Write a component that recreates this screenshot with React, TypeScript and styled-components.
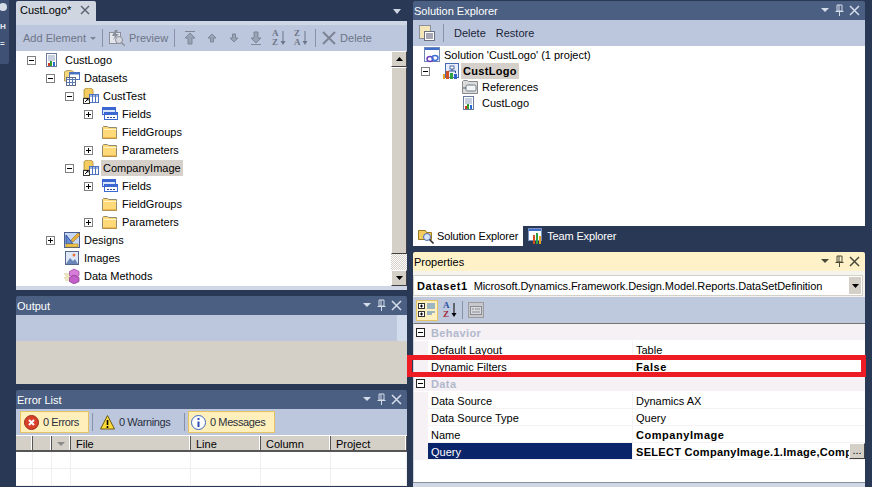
import { ReactNode } from "react";
import styled, { createGlobalStyle } from "styled-components";

const GlobalStyle = createGlobalStyle`
  html, body { margin: 0; padding: 0; background: #293955; overflow: hidden; }
  body { font-family: "Liberation Sans", Arial, sans-serif; font-size: 11px; color: #000; }
`;

type TreeNode = {
  level: number;
  label: string;
  toggle?: "plus" | "minus";
  icon: ReactNode;
  selected?: boolean;
};

const Expander = ({ kind, dark }: { kind?: "plus" | "minus"; dark?: boolean }) => (
  <ExpanderSlot>
    {kind && (
      <svg width="9" height="9" viewBox="0 0 9 9">
        <rect x="0.5" y="0.5" width="8" height="8" fill="#fff" stroke={dark ? "#222" : "#808080"} />
        <path d="M2 4.5h5" stroke="#000" />
        {kind === "plus" && <path d="M4.5 2v5" stroke="#000" />}
      </svg>
    )}
  </ExpanderSlot>
);

const ReportIcon = () => (
  <svg width="16" height="16" viewBox="0 0 16 16">
    <rect x="1.500" y="1.500" width="10" height="13" fill="#fff" stroke="#6a7a9c" />
    <path d="M3 4h7M3 6h7M3 8h7" stroke="#8fa0bd" />
    <rect x="3" y="11" width="2" height="3" fill="#d03a20" />
    <rect x="5" y="9" width="2" height="5" fill="#2fa02f" />
    <rect x="8" y="10" width="2" height="4" fill="#2a6bd0" />
  </svg>
);

const DatasetsIcon = () => (
  <svg width="16" height="16" viewBox="0 0 16 16">
    <path d="M0.500 2a4.500 1.500 0 0 1 9 0v9h-9z" fill="#f6d77c" stroke="#b09a5a" />
    <rect x="5.500" y="2.500" width="10" height="7" fill="#fff" stroke="#4a72c0" />
    <path d="M5.500 3.500h10" stroke="#4a72c0" strokeWidth="2" />
    <rect x="2.500" y="7.500" width="9" height="8" fill="#fff" stroke="#5a6a8a" />
    <path d="M2.500 9.500h9M5.500 8v7M8.500 8v7M3 12.500h8" stroke="#5a7ab0" />
  </svg>
);

const DatasetIcon = () => (
  <svg width="16" height="16" viewBox="0 0 16 16">
    <path d="M1 2a4 1.600 0 0 1 9 0v8H1z" fill="#f3cb5e" stroke="#a88a38" strokeWidth="0.800" />
    <rect x="6.500" y="6.500" width="9" height="8" fill="#fff" stroke="#4a72c0" />
    <path d="M6.500 8h9M9.500 7v7M12.500 7v7" stroke="#4a72c0" />
    <rect x="0.500" y="10.500" width="6" height="5" fill="#fff" stroke="#333" />
    <path d="M2 14l3-3M3.500 11H5v1.500" stroke="#000" fill="none" />
  </svg>
);

const FieldsIcon = () => (
  <svg width="16" height="16" viewBox="0 0 16 16">
    <rect x="0.500" y="1.500" width="13" height="7" fill="#dbe6fb" stroke="#3a68d0" />
    <path d="M1 3h12" stroke="#3a68d0" strokeWidth="2" />
    <rect x="2.500" y="6.500" width="13" height="7" fill="#fff" stroke="#3a68d0" />
    <path d="M3 8h12" stroke="#3a68d0" strokeWidth="2" />
    <path d="M5 11.500h2M8 11.500h2M11 11.500h2" stroke="#2a4aa0" />
  </svg>
);

const FolderIcon = () => (
  <svg width="16" height="16" viewBox="0 0 16 16">
    <path d="M0.500 3.500l1-1h4l1 1h8v11h-14z" fill="#ffd877" stroke="#8f8a70" />
    <path d="M1.500 5.500h13" stroke="#fff4c8" />
    <path d="M1 14h14" stroke="#d79a2a" />
  </svg>
);

const DesignsIcon = () => (
  <svg width="16" height="16" viewBox="0 0 16 16">
    <rect x="0.500" y="0.500" width="15" height="15" fill="#c6d8f5" stroke="#4a5f90" />
    <path d="M2 3l7 9H2z" fill="#6a8fd8" stroke="#2d4e9a" />
    <path d="M14 1l2 2-7 7-2-2z" fill="#e8b040" stroke="#9a6a10" strokeWidth="0.600" />
    <rect x="2" y="12" width="12" height="3" fill="#f2c94c" stroke="#a88020" strokeWidth="0.600" />
  </svg>
);

const ImagesIcon = () => (
  <svg width="16" height="16" viewBox="0 0 16 16">
    <rect x="1.500" y="1.500" width="13" height="13" fill="#dfe8f7" stroke="#55688c" />
    <circle cx="10" cy="5" r="1.500" fill="#e8743a" />
    <path d="M2 14l4-6 3 3 2-2 3 5z" fill="#6a86b8" />
  </svg>
);

const MethodsIcon = () => (
  <svg width="16" height="16" viewBox="0 0 16 16">
    <path d="M0 6h6M1 8h5M0 10h6M1 12h5" stroke="#d9c880" />
    <path d="M10 1l5 2.500v4L10 10 5.500 7.500v-4z" fill="#d77fd8" stroke="#9a3fa0" strokeWidth="0.700" />
    <path d="M10 7l5 2.500v4L10 16l-4.500-2.500v-4z" fill="#c25fc8" stroke="#8a2f90" strokeWidth="0.700" />
  </svg>
);

const SolutionIcon = () => (
  <svg width="16" height="16" viewBox="0 0 16 16">
    <rect x="0.500" y="0.500" width="15" height="14" fill="#fff" stroke="#6f87b8" />
    <rect x="1" y="1" width="14" height="2" fill="#3f6fc8" />
    <ellipse cx="6" cy="12" rx="3" ry="2.400" fill="none" stroke="#6a3fc0" strokeWidth="1.500" />
    <ellipse cx="11" cy="11" rx="3" ry="2.400" fill="none" stroke="#3f6fd8" strokeWidth="1.500" />
  </svg>
);

const ProjectIcon = () => (
  <svg width="16" height="16" viewBox="0 0 16 16">
    <rect x="2.500" y="0.500" width="13" height="14" fill="#e8eefb" stroke="#4a6ab0" />
    <rect x="7" y="3" width="4" height="3" fill="#fff" stroke="#2a4a90" strokeWidth="0.800" />
    <path d="M9 6v2M5.500 10V8h7v2" stroke="#2a4a90" fill="none" />
    <rect x="0" y="11" width="2" height="5" fill="#e8a020" />
    <rect x="3" y="8" width="3" height="8" fill="#d05020" />
    <rect x="7" y="10" width="3" height="6" fill="#30a040" />
    <rect x="11" y="11" width="3" height="5" fill="#3060c8" />
  </svg>
);

const ReferencesIcon = () => (
  <svg width="16" height="16" viewBox="0 0 16 16">
    <path d="M0.500 2.500l1-1h4l1 1h9v12h-15z" fill="#dcdcdc" stroke="#8a8a8a" />
    <rect x="4" y="6" width="10" height="6" rx="1.500" fill="#f4f4f4" stroke="#6a7a8a" />
    <path d="M1 9h3" stroke="#4a5a6a" />
  </svg>
);

const leftTree: TreeNode[] = [
  { level: 0, label: "CustLogo", toggle: "minus", icon: <ReportIcon /> },
  { level: 1, label: "Datasets", toggle: "minus", icon: <DatasetsIcon /> },
  { level: 2, label: "CustTest", toggle: "minus", icon: <DatasetIcon /> },
  { level: 3, label: "Fields", toggle: "plus", icon: <FieldsIcon /> },
  { level: 3, label: "FieldGroups", icon: <FolderIcon /> },
  { level: 3, label: "Parameters", toggle: "plus", icon: <FolderIcon /> },
  { level: 2, label: "CompanyImage", toggle: "minus", icon: <DatasetIcon />, selected: true },
  { level: 3, label: "Fields", toggle: "plus", icon: <FieldsIcon /> },
  { level: 3, label: "FieldGroups", icon: <FolderIcon /> },
  { level: 3, label: "Parameters", toggle: "plus", icon: <FolderIcon /> },
  { level: 1, label: "Designs", toggle: "plus", icon: <DesignsIcon /> },
  { level: 1, label: "Images", icon: <ImagesIcon /> },
  { level: 1, label: "Data Methods", icon: <MethodsIcon /> },
];

const columnWidths = [17, 19, 19, 120, 70, 70, 76];

const WindowControls = ({ dark }: { dark?: boolean }) => {
  const c = dark ? "#4a4a3a" : "#d5dcea";
  return (
    <svg width="40" height="13" viewBox="0 0 40 13">
      <path d="M0 4h8l-4 4z" fill={c} />
      <path d="M16 1h5v6h-5zM18 1v6M14.500 7.500h8M18.500 8v4" stroke={c} fill="none" />
      <path d="M29 2l9 9M38 2l-9 9" stroke={c} strokeWidth="1.500" />
    </svg>
  );
};

const Title = ({ children, active }: { children: ReactNode; active?: boolean }) => (
  <TitleBar $active={active}>
    <TitleText>{children}</TitleText>
    <WindowControls dark={active} />
  </TitleBar>
);

const Arrow = ({ d }: { d: string }) => (
  <svg width="16" height="16" viewBox="0 0 16 16">
    <path d={d} fill="#9aa3b5" stroke="#7f8798" />
  </svg>
);

const SortIcon = ({ top, bottom, disabled }: { top: string; bottom: string; disabled?: boolean }) => (
  <SortBox $disabled={disabled}>
    <span>
      <i>{top}</i>
      <i>{bottom}</i>
    </span>
    <svg width="6" height="16" viewBox="0 0 6 16">
      <path d="M3 1v12" stroke={disabled ? "#6d7587" : "#000"} />
      <path d="M0.500 11h5L3 15z" fill={disabled ? "#6d7587" : "#000"} />
    </svg>
  </SortBox>
);

export default function App() {
  return (
    <>
      <GlobalStyle />
      <Page>
        <Rail>
          <RailTab>
            <svg width="9" height="18" viewBox="0 0 9 18">
              <circle cx="3" cy="7" r="4" fill="#d6dce8" />
            </svg>
            <RailGlyph>H</RailGlyph>
            <RailGlyph>=</RailGlyph>
          </RailTab>
        </Rail>

        <LeftColumn>
          <DocTabs>
            <DocTab>
              CustLogo*
              <svg width="10" height="10" viewBox="0 0 10 10">
                <path d="M1 1l8 8M9 1l-8 8" stroke="#5a6070" strokeWidth="1.400" />
              </svg>
            </DocTab>
            <svg width="8" height="5" viewBox="0 0 8 5">
              <path d="M0 0h8L4 5z" fill="#cfd6e5" />
            </svg>
          </DocTabs>
          <DocBand />
          <Toolbar $height={26} $pad={7}>
            <MutedButton>
              Add Element
              <svg width="6" height="3" viewBox="0 0 6 3">
                <path d="M0 0h6L3 3z" fill="#7d8494" />
              </svg>
            </MutedButton>
            <Sep />
            <svg width="16" height="16" viewBox="0 0 16 16">
              <rect x="0.500" y="2.500" width="11" height="11" fill="#e5e7ec" stroke="#8a8f9c" />
              <path d="M6 0L3 6h3L4 10l6-6H7l2-4z" fill="#8a8f9c" />
              <circle cx="10" cy="10" r="3.500" fill="#d5d8df" stroke="#8a8f9c" />
              <path d="M12.500 12.500L16 16" stroke="#8a8f9c" strokeWidth="1.500" />
            </svg>
            <MutedButton>Preview</MutedButton>
            <Sep $after={3} $before={2} />
            <ToolGroup>
              <Arrow d="M3 1.500h10M8 3l5 5h-3v6H6V8H3z" />
              <Arrow d="M8 4l4 4h-2.500v4h-3V8H4z" />
              <Arrow d="M8 12l4-4h-2.500V4h-3v4H4z" />
              <Arrow d="M3 14.500h10M8 13l5-5h-3V2H6v6H3z" />
              <SortIcon top="A" bottom="Z" disabled />
              <SortIcon top="Z" bottom="A" disabled />
            </ToolGroup>
            <Sep $before={3} />
            <svg width="14" height="14" viewBox="0 0 14 14">
              <path d="M1 1l12 12M13 1L1 13" stroke="#7d8494" strokeWidth="2" />
            </svg>
            <MutedButton>Delete</MutedButton>
          </Toolbar>
          <TreePane>
            <Tree>
              {leftTree.map((n, i) => (
                <TreeRow key={i} $level={n.level}>
                  <Expander kind={n.toggle} />
                  <IconSlot>{n.icon}</IconSlot>
                  <NodeLabel $selected={n.selected}>{n.label}</NodeLabel>
                </TreeRow>
              ))}
            </Tree>
            <ScrollBar>
              <ScrollButton>
                <svg width="7" height="4" viewBox="0 0 7 4">
                  <path d="M3.500 0L7 4H0z" fill="#000" />
                </svg>
              </ScrollButton>
              <ScrollThumb />
              <ScrollTrack />
              <ScrollButton>
                <svg width="7" height="4" viewBox="0 0 7 4">
                  <path d="M0 0h7L3.500 4z" fill="#000" />
                </svg>
              </ScrollButton>
            </ScrollBar>
          </TreePane>
          <DocBand />

          <PanelGap />
          <Title>Output</Title>
          <Toolbar $height={26}>
            <OutputGrip />
          </Toolbar>
          <OutputBody />

          <PanelGap />
          <Title>Error List</Title>
          <Toolbar $height={26} $pad={4} $gap={1}>
            <FilterButton $on $w={69} $pad={3}>
              <svg width="15" height="15" viewBox="0 0 15 15">
                <circle cx="7.500" cy="7.500" r="7" fill="#d8402a" stroke="#9a2a1a" />
                <path d="M5 5l5 5M10 5l-5 5" stroke="#fff" strokeWidth="2" />
              </svg>
              0 Errors
            </FilterButton>
            <Sep />
            <FilterButton $w={85} $pad={3}>
              <svg width="15" height="15" viewBox="0 0 15 15">
                <path d="M7.500 0.500L14.500 14H0.500z" fill="#ffd83a" stroke="#6a5a10" />
                <path d="M7.500 5v5" stroke="#000" strokeWidth="1.600" />
                <path d="M7.500 11v2" stroke="#000" strokeWidth="1.600" />
              </svg>
              0 Warnings
            </FilterButton>
            <Sep />
            <FilterButton $on $w={87} $pad={2}>
              <svg width="15" height="15" viewBox="0 0 15 15">
                <circle cx="7.500" cy="7.500" r="7" fill="#fff" stroke="#3a66c0" />
                <path d="M7.500 3v2M7.500 6.500V12" stroke="#2a4fb0" strokeWidth="2" />
              </svg>
              0 Messages
            </FilterButton>
          </Toolbar>
          <ErrorHeader>
            <HeadCell $w={17} />
            <HeadCell $w={19} />
            <HeadCell $w={19}>
              <svg width="8" height="4" viewBox="0 0 8 4">
                <path d="M0 0h8L4 4z" fill="#8a8a8a" />
              </svg>
            </HeadCell>
            <HeadCell $w={120}>File</HeadCell>
            <HeadCell $w={70}>Line</HeadCell>
            <HeadCell $w={70}>Column</HeadCell>
            <HeadCell $w={76}>Project</HeadCell>
          </ErrorHeader>
          <ErrorRow>
            {columnWidths.map((w, i) => (
              <EmptyCell key={i} $w={w} />
            ))}
          </ErrorRow>
          <ErrorRow>
            {columnWidths.map((w, i) => (
              <EmptyCell key={i} $w={w} />
            ))}
          </ErrorRow>
        </LeftColumn>

        <RightColumn>
          <Title>Solution Explorer</Title>
          <Toolbar $height={26} $pad={6} $gap={6}>
            <svg width="16" height="16" viewBox="0 0 16 16">
              <rect x="0.500" y="0.500" width="11" height="13" fill="#f4e6b8" stroke="#8a8f9c" />
              <rect x="5.500" y="6.500" width="10" height="9" fill="#fff" stroke="#6a7080" />
              <path d="M7 9h7M7 11h7M7 13h7" stroke="#4a5068" />
            </svg>
            <Sep />
            <PlainButton>Delete</PlainButton>
            <PlainButton>Restore</PlainButton>
          </Toolbar>
          <SolutionPane>
            <SolutionRow $level={0}>
              <IconSlot><SolutionIcon /></IconSlot>
              <NodeLabel>Solution 'CustLogo' (1 project)</NodeLabel>
            </SolutionRow>
            <SolutionRow $level={1}>
              <Expander kind="minus" />
              <IconSlot><ProjectIcon /></IconSlot>
              <NodeLabel $selected $bold>CustLogo</NodeLabel>
            </SolutionRow>
            <SolutionRow $level={2}>
              <IconSlot><ReferencesIcon /></IconSlot>
              <NodeLabel>References</NodeLabel>
            </SolutionRow>
            <SolutionRow $level={2}>
              <IconSlot><ReportIcon /></IconSlot>
              <NodeLabel>CustLogo</NodeLabel>
            </SolutionRow>
          </SolutionPane>
          <ToolTabs>
            <ToolTab $active>
              <svg width="16" height="16" viewBox="0 0 16 16">
                <path d="M0.500 2.500h7l1 2h5v7h-13z" fill="#f3cb5e" stroke="#9a7a20" />
                <circle cx="9" cy="9" r="3.500" fill="#d5e4f8" stroke="#4a6ab0" />
                <path d="M11.500 11.500L15.500 15.500" stroke="#333" strokeWidth="1.600" />
              </svg>
              Solution Explorer
            </ToolTab>
            <ToolTab>
              <svg width="16" height="16" viewBox="0 0 16 16">
                <rect x="0.500" y="0.500" width="13" height="12" fill="#fff" stroke="#7a90c0" />
                <rect x="1" y="1" width="12" height="2" fill="#3f6fc8" />
                <rect x="5" y="7" width="2" height="9" fill="#d05020" />
                <rect x="8" y="5" width="2" height="11" fill="#30a040" />
                <rect x="11" y="8" width="2" height="8" fill="#e8a020" />
              </svg>
              Team Explorer
            </ToolTab>
          </ToolTabs>

          <PanelGap />
          <Title active>Properties</Title>
          <ComboBand>
            <Combo>
              <ComboText><b>Dataset1</b>Microsoft.Dynamics.Framework.Design.Model.Reports.DataSetDefinition</ComboText>
              <ComboButton>
                <svg width="7" height="4" viewBox="0 0 7 4">
                  <path d="M0 0h7L3.500 4z" fill="#000" />
                </svg>
              </ComboButton>
            </Combo>
          </ComboBand>
          <PropToolbar>
            <ToggleButton>
              <svg width="20" height="18" viewBox="0 0 20 18">
                <rect x="1.500" y="2.500" width="6" height="5" fill="#fff" stroke="#333" />
                <rect x="1.500" y="10.500" width="6" height="5" fill="#fff" stroke="#333" />
                <path d="M3 5h3M4.500 3.500v3M3 13h3M4.500 11.500v3" stroke="#000" />
                <path d="M10 3h8M10 5h8M10 7h8M10 11h8M10 13h5" stroke="#3a7ac0" />
              </svg>
            </ToggleButton>
            <SortIcon top="A" bottom="Z" />
            <Sep />
            <svg width="16" height="16" viewBox="0 0 16 16">
              <rect x="0.500" y="0.500" width="15" height="15" fill="#c6c8cc" stroke="#9a9ca2" />
              <rect x="2.500" y="4.500" width="11" height="8" fill="#d8dade" stroke="#8a8c92" />
              <path d="M4 7h2M7 7h5M4 10h8" stroke="#8a8c92" />
            </svg>
          </PropToolbar>
          <PropGrid>
            <CategoryRow>
              <CategoryToggle><Expander kind="minus" dark /></CategoryToggle>
              Behavior
            </CategoryRow>
            <PropRow>
              <PropName>Default Layout</PropName>
              <PropValue>Table</PropValue>
            </PropRow>
            <PropRow>
              <PropName>Dynamic Filters</PropName>
              <PropValue $bold>False</PropValue>
            </PropRow>
            <CategoryRow>
              <CategoryToggle><Expander kind="minus" dark /></CategoryToggle>
              Data
            </CategoryRow>
            <PropRow>
              <PropName>Data Source</PropName>
              <PropValue>Dynamics AX</PropValue>
            </PropRow>
            <PropRow>
              <PropName>Data Source Type</PropName>
              <PropValue>Query</PropValue>
            </PropRow>
            <PropRow>
              <PropName>Name</PropName>
              <PropValue $bold>CompanyImage</PropValue>
            </PropRow>
            <PropRow>
              <PropName $selected>Query</PropName>
              <PropValue $bold>
                <Clip>SELECT CompanyImage.1.Image,Comp</Clip>
                <EllipsisButton>...</EllipsisButton>
              </PropValue>
            </PropRow>
          </PropGrid>
          <PropFooter />
        </RightColumn>
        <Highlight />
      </Page>
    </>
  );
}

const Page = styled.div`
  position: relative;
  display: flex;
  width: 872px;
  height: 487px;
  overflow: hidden;
  background: #293955;
`;

const Rail = styled.div`
  width: 16px;
  flex-shrink: 0;
`;

const RailTab = styled.div`
  width: 9px;
  height: 64px;
  background: #3f5276;
  border-radius: 0 0 2px 0;
  overflow: hidden;
  display: flex;
  flex-direction: column;
  color: #e6eaf2;
  font-size: 8px;
  line-height: 17px;
`;

const RailGlyph = styled.span`
  font-weight: bold;
`;

const LeftColumn = styled.div`
  width: 391px;
  flex-shrink: 0;
  margin-right: 6px;
  display: flex;
  flex-direction: column;
`;

const RightColumn = styled.div`
  width: 452px;
  flex-shrink: 0;
  padding-top: 1px;
  display: flex;
  flex-direction: column;
`;

const DocTabs = styled.div`
  height: 21px;
  flex-shrink: 0;
  display: flex;
  justify-content: space-between;
  align-items: flex-end;
  & > svg {
    margin: 0 6px 7px 0;
  }
`;

const DocTab = styled.div`
  width: 80px;
  height: 20px;
  box-sizing: border-box;
  padding: 0 6px 2px 4px;
  display: flex;
  align-items: center;
  justify-content: space-between;
  background: #cfd6e0;
  border-radius: 2px 2px 0 0;
`;

const DocBand = styled.div`
  height: 4px;
  flex-shrink: 0;
  background: #cfd6e5;
`;

const PanelGap = styled.div`
  height: 6px;
  flex-shrink: 0;
`;

const TitleBar = styled.div<{ $active?: boolean }>`
  height: 19px;
  flex-shrink: 0;
  box-sizing: border-box;
  padding: 0 4px 0 1px;
  display: flex;
  align-items: center;
  justify-content: space-between;
  border-radius: 2px 2px 0 0;
  background: ${(p) => (p.$active ? "#fff2c9" : "#4b5f82")};
  color: ${(p) => (p.$active ? "#000" : "#fff")};
`;

const TitleText = styled.span`
  font-size: 11px;
`;

const Toolbar = styled.div<{ $height: number; $pad?: number; $gap?: number }>`
  position: relative;
  height: ${(p) => p.$height}px;
  flex-shrink: 0;
  box-sizing: border-box;
  padding-left: ${(p) => p.$pad ?? 0}px;
  display: flex;
  align-items: center;
  gap: ${(p) => p.$gap ?? 4}px;
  background: #bcc7de;
`;

const ToolGroup = styled.div`
  display: flex;
  align-items: center;
  gap: 6px;
`;

const MutedButton = styled.span`
  display: inline-flex;
  align-items: center;
  gap: 4px;
  color: #6d7587;
  font-size: 11px;
`;

const PlainButton = styled.span`
  padding: 0 2px;
  color: #1b2438;
`;

const Sep = styled.span<{ $before?: number; $after?: number }>`
  width: 1px;
  height: 18px;
  margin: 0 ${(p) => p.$after ?? 2}px 0 ${(p) => p.$before ?? 2}px;
  background: #8792a8;
  flex-shrink: 0;
`;

const SortBox = styled.span<{ $disabled?: boolean }>`
  width: 14px;
  margin-left: 2px;
  display: inline-flex;
  align-items: center;
  gap: 1px;
  color: ${(p) => (p.$disabled ? "#6d7587" : "#2a4fa0")};
  span {
    display: flex;
    flex-direction: column;
    font-size: 9px;
    line-height: 9px;
    font-family: "Liberation Serif", serif;
    font-weight: bold;
  }
  i {
    font-style: normal;
  }
  i:last-child {
    color: ${(p) => (p.$disabled ? "#6d7587" : "#a02a3a")};
  }
`;

const TreePane = styled.div`
  height: 235px;
  flex-shrink: 0;
  display: flex;
  background: #fff;
`;

const Tree = styled.div`
  flex: 1;
`;

const TreeRow = styled.div<{ $level: number }>`
  height: 18px;
  display: flex;
  align-items: center;
  padding-left: ${(p) => 11 + p.$level * 19}px;
`;

const ExpanderSlot = styled.span`
  width: 9px;
  height: 9px;
  flex-shrink: 0;
  margin-right: 9px;
  display: flex;
`;

const IconSlot = styled.span`
  width: 16px;
  height: 16px;
  flex-shrink: 0;
  display: flex;
`;

const NodeLabel = styled.span<{ $selected?: boolean; $bold?: boolean }>`
  margin-left: 2px;
  padding: 0 2px;
  height: 16px;
  line-height: 17px;
  white-space: nowrap;
  background: ${(p) => (p.$selected ? "#d6d0ca" : "transparent")};
  font-weight: ${(p) => (p.$bold ? "bold" : "normal")};
  letter-spacing: ${(p) => (p.$bold ? "0.3px" : "0")};
`;

const ScrollBar = styled.div`
  width: 16px;
  flex-shrink: 0;
  display: flex;
  flex-direction: column;
  background: #d4d0c8;
`;

const ScrollButton = styled.div`
  height: 16px;
  box-sizing: border-box;
  flex-shrink: 0;
  display: flex;
  align-items: center;
  justify-content: center;
  background: #d4d0c8;
  border: 1px solid;
  border-color: #fff #404040 #404040 #fff;
`;

const ScrollThumb = styled.div`
  height: 187px;
  box-sizing: border-box;
  background: #d4d0c8;
  border: 1px solid;
  border-color: #fff #404040 #404040 #fff;
`;

const ScrollTrack = styled.div`
  flex: 1;
  background: repeating-conic-gradient(#fff 0 25%, #d4d0c8 0 50%) 0 0 / 2px 2px;
`;

const OutputGrip = styled.div`
  position: absolute;
  right: 0;
  top: 0;
  bottom: 0;
  width: 10px;
  background: #d2dcec;
`;

const OutputBody = styled.div`
  height: 43px;
  flex-shrink: 0;
  background: #d4d0c8;
`;

const FilterButton = styled.span<{ $on?: boolean; $w: number; $pad: number }>`
  width: ${(p) => p.$w}px;
  height: 22px;
  box-sizing: border-box;
  padding-left: ${(p) => p.$pad}px;
  flex-shrink: 0;
  display: inline-flex;
  align-items: center;
  gap: 4px;
  letter-spacing: -0.4px;
  white-space: nowrap;
  border: 1px solid ${(p) => (p.$on ? "#e5c365" : "transparent")};
  background: ${(p) => (p.$on ? "#ffefbb" : "transparent")};
  color: #2a3040;
`;

const ErrorHeader = styled.div`
  display: flex;
  height: 17px;
  flex-shrink: 0;
  background: #d4d0c8;
  border-top: 1px solid #fff;
  border-bottom: 2px solid #555;
  box-sizing: border-box;
`;

const HeadCell = styled.div<{ $w: number }>`
  width: ${(p) => p.$w}px;
  flex-shrink: 0;
  box-sizing: border-box;
  padding: 2px 0 0 5px;
  display: flex;
  align-items: center;
  border-right: 1px solid #555;
  box-shadow: inset -1px 0 0 #fff;
`;

const ErrorRow = styled.div`
  display: flex;
  height: 17px;
  flex-shrink: 0;
  background: #fff;
  border-bottom: 1px solid #f1efee;
  box-sizing: border-box;
`;

const EmptyCell = styled.div<{ $w: number }>`
  width: ${(p) => p.$w}px;
  flex-shrink: 0;
  box-sizing: border-box;
  border-right: 1px solid #f1efee;
`;

const SolutionPane = styled.div`
  height: 180px;
  flex-shrink: 0;
  background: #fff;
  padding-top: 1px;
  box-sizing: border-box;
`;

const SolutionRow = styled.div<{ $level: number }>`
  height: 16px;
  display: flex;
  align-items: center;
  padding-left: ${(p) => [11, 8, 49][p.$level]}px;
  ${ExpanderSlot} {
    margin-right: 13px;
  }
`;

const ToolTabs = styled.div`
  height: 20px;
  flex-shrink: 0;
  display: flex;
`;

const ToolTab = styled.div<{ $active?: boolean }>`
  padding: 0 5px;
  box-sizing: border-box;
  display: flex;
  align-items: center;
  gap: 3px;
  white-space: nowrap;
  line-height: 22px;
  letter-spacing: -0.15px;
  background: ${(p) => (p.$active ? "#fff" : "transparent")};
  color: ${(p) => (p.$active ? "#000" : "#fff")};
`;

const ComboBand = styled.div`
  height: 26px;
  flex-shrink: 0;
  box-sizing: border-box;
  padding: 4px 2px 1px 0;
  background: #f5f3ee;
`;

const Combo = styled.div`
  height: 21px;
  box-sizing: border-box;
  display: flex;
  align-items: center;
  justify-content: space-between;
  background: #fff;
  border: 1px solid #d4d0c8;
`;

const ComboText = styled.span`
  padding-left: 3px;
  white-space: nowrap;
  letter-spacing: -0.09px;
  b {
    margin-right: 6px;
    letter-spacing: 0.6px;
  }
`;

const ComboButton = styled.span`
  width: 12px;
  height: 17px;
  margin-right: 1px;
  display: flex;
  align-items: center;
  justify-content: center;
  background: #d4d0c8;
`;

const PropToolbar = styled.div`
  height: 26px;
  flex-shrink: 0;
  box-sizing: border-box;
  padding: 0 3px;
  display: flex;
  align-items: center;
  gap: 3px;
  background: #bfc9de;
`;

const ToggleButton = styled.span`
  width: 22px;
  height: 21px;
  box-sizing: border-box;
  display: flex;
  align-items: center;
  justify-content: center;
  background: #fff0bf;
  border: 1px solid #e5c365;
`;

const PropGrid = styled.div`
  flex: 1;
  background: #fff;
  border-top: 1px solid #77746f;
  border-left: 1px solid #d0d4dd;
`;

const CategoryRow = styled.div`
  height: 17px;
  box-sizing: border-box;
  padding-top: 1px;
  display: flex;
  align-items: center;
  gap: 2px;
  background: #f5f1f5;
  color: #b2b8cc;
  font-weight: bold;
  letter-spacing: 0.4px;
  border-bottom: 1px solid #fff;
`;

const CategoryToggle = styled.span`
  width: 15px;
  padding-left: 2px;
  box-sizing: border-box;
  display: flex;
`;

const PropRow = styled.div`
  height: 17px;
  box-sizing: border-box;
  display: flex;
  padding-left: 14px;
  background: #f5f1f5;
`;

const PropName = styled.div<{ $selected?: boolean }>`
  width: 204px;
  box-sizing: border-box;
  padding-left: 3px;
  line-height: 18px;
  border-bottom: 1px solid #f5f1f5;
  background: ${(p) => (p.$selected ? "#0a246a" : "#fff")};
  color: ${(p) => (p.$selected ? "#fff" : "#000")};
`;

const PropValue = styled.div<{ $bold?: boolean }>`
  flex: 1;
  min-width: 0;
  margin-left: 1px;
  padding-left: 3px;
  line-height: 18px;
  display: flex;
  justify-content: space-between;
  border-bottom: 1px solid #f5f1f5;
  background: #fff;
  font-weight: ${(p) => (p.$bold ? "bold" : "normal")};
  letter-spacing: ${(p) => (p.$bold ? "0.55px" : "0")};
`;

const Clip = styled.span`
  flex: 1;
  min-width: 0;
  overflow: hidden;
  white-space: nowrap;
  letter-spacing: 0.3px;
`;

const EllipsisButton = styled.span`
  width: 16px;
  height: 16px;
  box-sizing: border-box;
  flex-shrink: 0;
  text-align: center;
  line-height: 12px;
  letter-spacing: 0;
  background: #d4d0c8;
  border: 1px solid;
  border-color: #fff #404040 #404040 #fff;
  font-weight: normal;
`;

const PropFooter = styled.div`
  height: 4px;
  flex-shrink: 0;
  background: #cfd6e5;
  border-top: 1px solid #8a8f9c;
`;

const Highlight = styled.div`
  position: absolute;
  left: 407px;
  top: 355px;
  width: 459px;
  height: 22px;
  box-sizing: border-box;
  border: 5px solid #ed1c24;
  pointer-events: none;
`;
